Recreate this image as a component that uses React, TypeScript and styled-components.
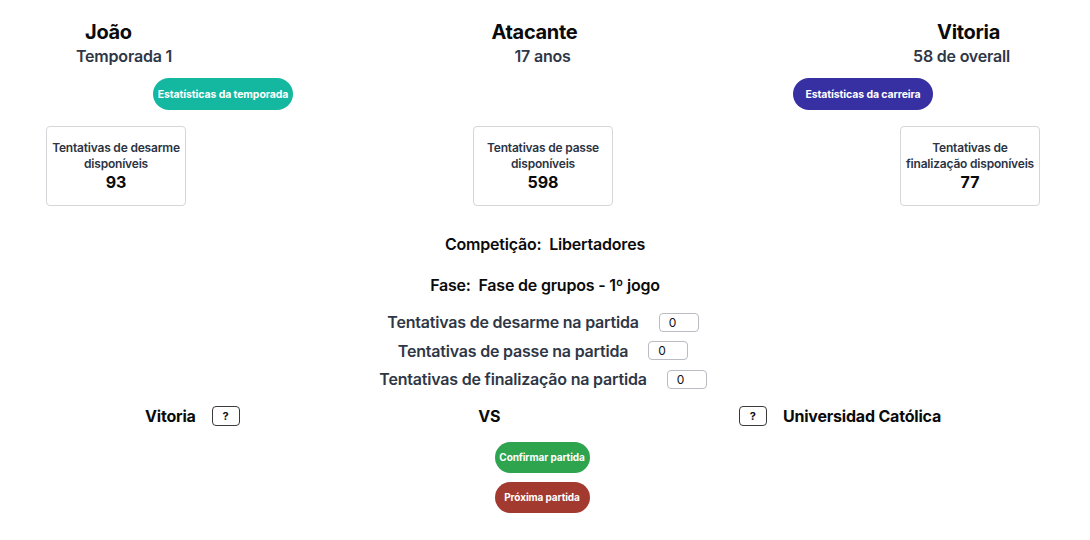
import React from "react";
import styled, { createGlobalStyle } from "styled-components";

const Global = createGlobalStyle`
  html, body { margin: 0; padding: 0; background: #ffffff; }
  body { font-family: Inter, "Open Sans", Arial, sans-serif; color: #111; }
  * { box-sizing: border-box; }
`;

const Page = styled.div`
  width: 1090px;
  height: 540px;
  padding-top: 20px;
  display: flex;
  flex-direction: column;
`;

const SpreadRow = styled.div<{ $pl: number; $pr: number; $mt?: number }>`
  display: flex;
  justify-content: space-between;
  align-items: center;
  padding-left: ${(p) => p.$pl}px;
  padding-right: ${(p) => p.$pr}px;
  margin-top: ${(p) => p.$mt ?? 0}px;
`;

const Name = styled.div`
  font-size: 20px;
  line-height: 24px;
  font-weight: 700;
  color: #0b0b0b;
  letter-spacing: -0.3px;
`;

const Sub = styled.div`
  font-size: 16px;
  line-height: 20px;
  font-weight: 600;
  color: #2f3747;
  letter-spacing: -0.2px;
`;

const Pill = styled.button<{ $bg: string; $w: number }>`
  width: ${(p) => p.$w}px;
  height: 32px;
  border: none;
  border-radius: 16px;
  background: ${(p) => p.$bg};
  color: #fff;
  font-family: inherit;
  font-size: 10.5px;
  font-weight: 700;
  letter-spacing: -0.1px;
  padding: 0;
  display: flex;
  align-items: center;
  justify-content: center;
`;

const Card = styled.div`
  width: 140px;
  height: 80px;
  border: 1px solid #d4d6da;
  border-radius: 4px;
  padding-top: 13px;
  display: flex;
  flex-direction: column;
  align-items: center;
  text-align: center;
`;

const CardLabel = styled.div`
  font-size: 12px;
  line-height: 16px;
  font-weight: 600;
  color: #2c3444;
  letter-spacing: -0.2px;
  white-space: nowrap;
`;

const CardValue = styled.div`
  font-size: 16px;
  line-height: 20px;
  font-weight: 700;
  color: #0b0b0b;
`;

const InfoLine = styled.div<{ $mt: number }>`
  margin-top: ${(p) => p.$mt}px;
  text-align: center;
  font-size: 16px;
  line-height: 20px;
  font-weight: 600;
  color: #0b0b0b;
  letter-spacing: -0.2px;
  white-space: pre;
`;

const InputRows = styled.div`
  margin-top: 15px;
  display: flex;
  flex-direction: column;
  align-items: center;
  gap: 4px;
  padding-right: 4px;
`;

const InputRow = styled.div`
  height: 24.5px;
  display: flex;
  align-items: center;
  gap: 20px;
`;

const RowLabel = styled.span`
  font-size: 16px;
  font-weight: 600;
  color: #2f3747;
  letter-spacing: -0.2px;
`;

const NumInput = styled.div`
  width: 40px;
  height: 19px;
  border: 1px solid #b9bcc2;
  border-radius: 4px;
  font-size: 12px;
  line-height: 17px;
  padding-left: 9px;
  color: #111;
`;

const TeamGroup = styled.div`
  display: flex;
  align-items: center;
  gap: 16px;
`;

const TeamName = styled.span`
  font-size: 16px;
  font-weight: 700;
  color: #0b0b0b;
  letter-spacing: -0.2px;
`;

const ScoreBox = styled.div`
  width: 28px;
  height: 20px;
  border: 1px solid #3a3a3a;
  border-radius: 4px;
  display: flex;
  align-items: center;
  justify-content: center;
  font-size: 11px;
  font-weight: 700;
  color: #111;
`;

const Actions = styled.div`
  margin-top: 16px;
  display: flex;
  flex-direction: column;
  align-items: center;
  gap: 9px;
  padding-right: 6px;
`;

const ActionBtn = styled(Pill)`
  height: 31px;
  font-size: 10px;
`;

const stats = [
  { label: ["Tentativas de desarme", "disponíveis"], value: "93" },
  { label: ["Tentativas de passe", "disponíveis"], value: "598" },
  { label: ["Tentativas de", "finalização disponíveis"], value: "77" },
];

const rows = [
  "Tentativas de desarme na partida",
  "Tentativas de passe na partida",
  "Tentativas de finalização na partida",
];

export default function App() {
  return (
    <>
      <Global />
      <Page>
        <SpreadRow $pl={85} $pr={90}>
          <Name>João</Name>
          <Name>Atacante</Name>
          <Name>Vitoria</Name>
        </SpreadRow>
        <SpreadRow $pl={76} $pr={80} $mt={2}>
          <Sub>Temporada 1</Sub>
          <Sub>17 anos</Sub>
          <Sub>58 de overall</Sub>
        </SpreadRow>
        <SpreadRow $pl={153} $pr={157} $mt={12}>
          <Pill $bg="#14b8a0" $w={140}>Estatísticas da temporada</Pill>
          <Pill $bg="#3730a3" $w={140}>Estatísticas da carreira</Pill>
        </SpreadRow>
        <SpreadRow $pl={46} $pr={50} $mt={16}>
          {stats.map((s) => (
            <Card key={s.value}>
              <CardLabel>{s.label[0]}</CardLabel>
              <CardLabel>{s.label[1]}</CardLabel>
              <CardValue>{s.value}</CardValue>
            </Card>
          ))}
        </SpreadRow>
        <InfoLine $mt={28}>{"Competição:  Libertadores"}</InfoLine>
        <InfoLine $mt={21}>{"Fase:  Fase de grupos - 1º jogo"}</InfoLine>
        <InputRows>
          {rows.map((r) => (
            <InputRow key={r}>
              <RowLabel>{r}</RowLabel>
              <NumInput>0</NumInput>
            </InputRow>
          ))}
        </InputRows>
        <SpreadRow $pl={145} $pr={149} $mt={14}>
          <TeamGroup>
            <TeamName>Vitoria</TeamName>
            <ScoreBox>?</ScoreBox>
          </TeamGroup>
          <TeamName>VS</TeamName>
          <TeamGroup>
            <ScoreBox>?</ScoreBox>
            <TeamName>Universidad Católica</TeamName>
          </TeamGroup>
        </SpreadRow>
        <Actions>
          <ActionBtn $bg="#2ea44f" $w={95}>Confirmar partida</ActionBtn>
          <ActionBtn $bg="#a33a30" $w={95}>Próxima partida</ActionBtn>
        </Actions>
      </Page>
    </>
  );
}
